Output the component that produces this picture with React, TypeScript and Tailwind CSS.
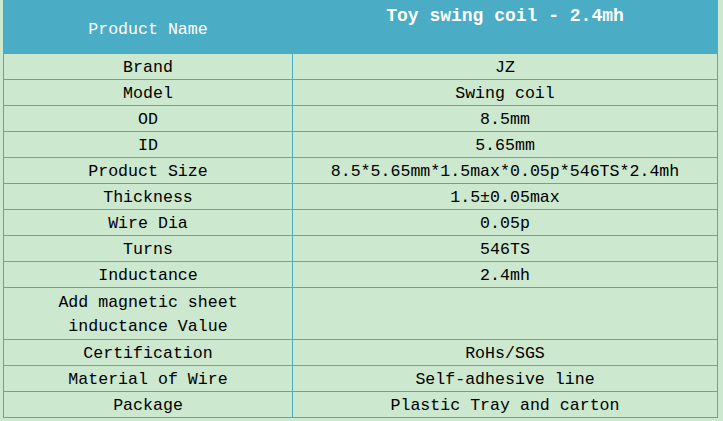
import React from 'react';

const ROWS: [string, string][] = [
    ['Brand', 'JZ'],
    ['Model', 'Swing coil'],
    ['OD', '8.5mm'],
    ['ID', '5.65mm'],
    ['Product Size', '8.5*5.65mm*1.5max*0.05p*546TS*2.4mh'],
    ['Thickness', '1.5±0.05max'],
    ['Wire Dia', '0.05p'],
    ['Turns', '546TS'],
    ['Inductance', '2.4mh'],
    ['Add magnetic sheet inductance Value', ''],
    ['Certification', 'RoHs/SGS'],
    ['Material of Wire', 'Self-adhesive line'],
    ['Package', 'Plastic Tray and carton'],
];

export default function App() {
    return (
        <div className="w-[723px] h-[421px] bg-[#cce8cf] pl-[3px] overflow-hidden font-['Liberation_Mono',monospace] text-[16.6px] text-black">
            <table className="w-[715px] border-collapse table-fixed">
                <colgroup>
                    <col className="w-[289px]" />
                    <col />
                </colgroup>
                <thead>
                    <tr className="h-[53px] bg-[#4bacc6] text-white">
                        <th className="border border-[#4bacc6] font-normal align-middle pt-[6px]">
                            Product Name
                        </th>
                        <th className="border border-[#4bacc6] font-bold text-[18px] align-top pt-[2px]">
                            Toy swing coil - 2.4mh
                        </th>
                    </tr>
                </thead>
                <tbody>
                    {ROWS.map(([label, value]) => {
                        const tall = label.length > 20;
                        const cell = tall
                            ? 'border border-[#4bacc6] text-center pt-[3px] pb-0 leading-[24px]'
                            : 'border border-[#4bacc6] text-center pt-[2px] pb-0 leading-[23px]';
                        return (
                            <tr key={label}>
                                <td className={cell + ' px-[8px]'}>{label}</td>
                                <td className={cell + ' whitespace-nowrap'}>{value}</td>
                            </tr>
                        );
                    })}
                </tbody>
            </table>
        </div>
    );
}
